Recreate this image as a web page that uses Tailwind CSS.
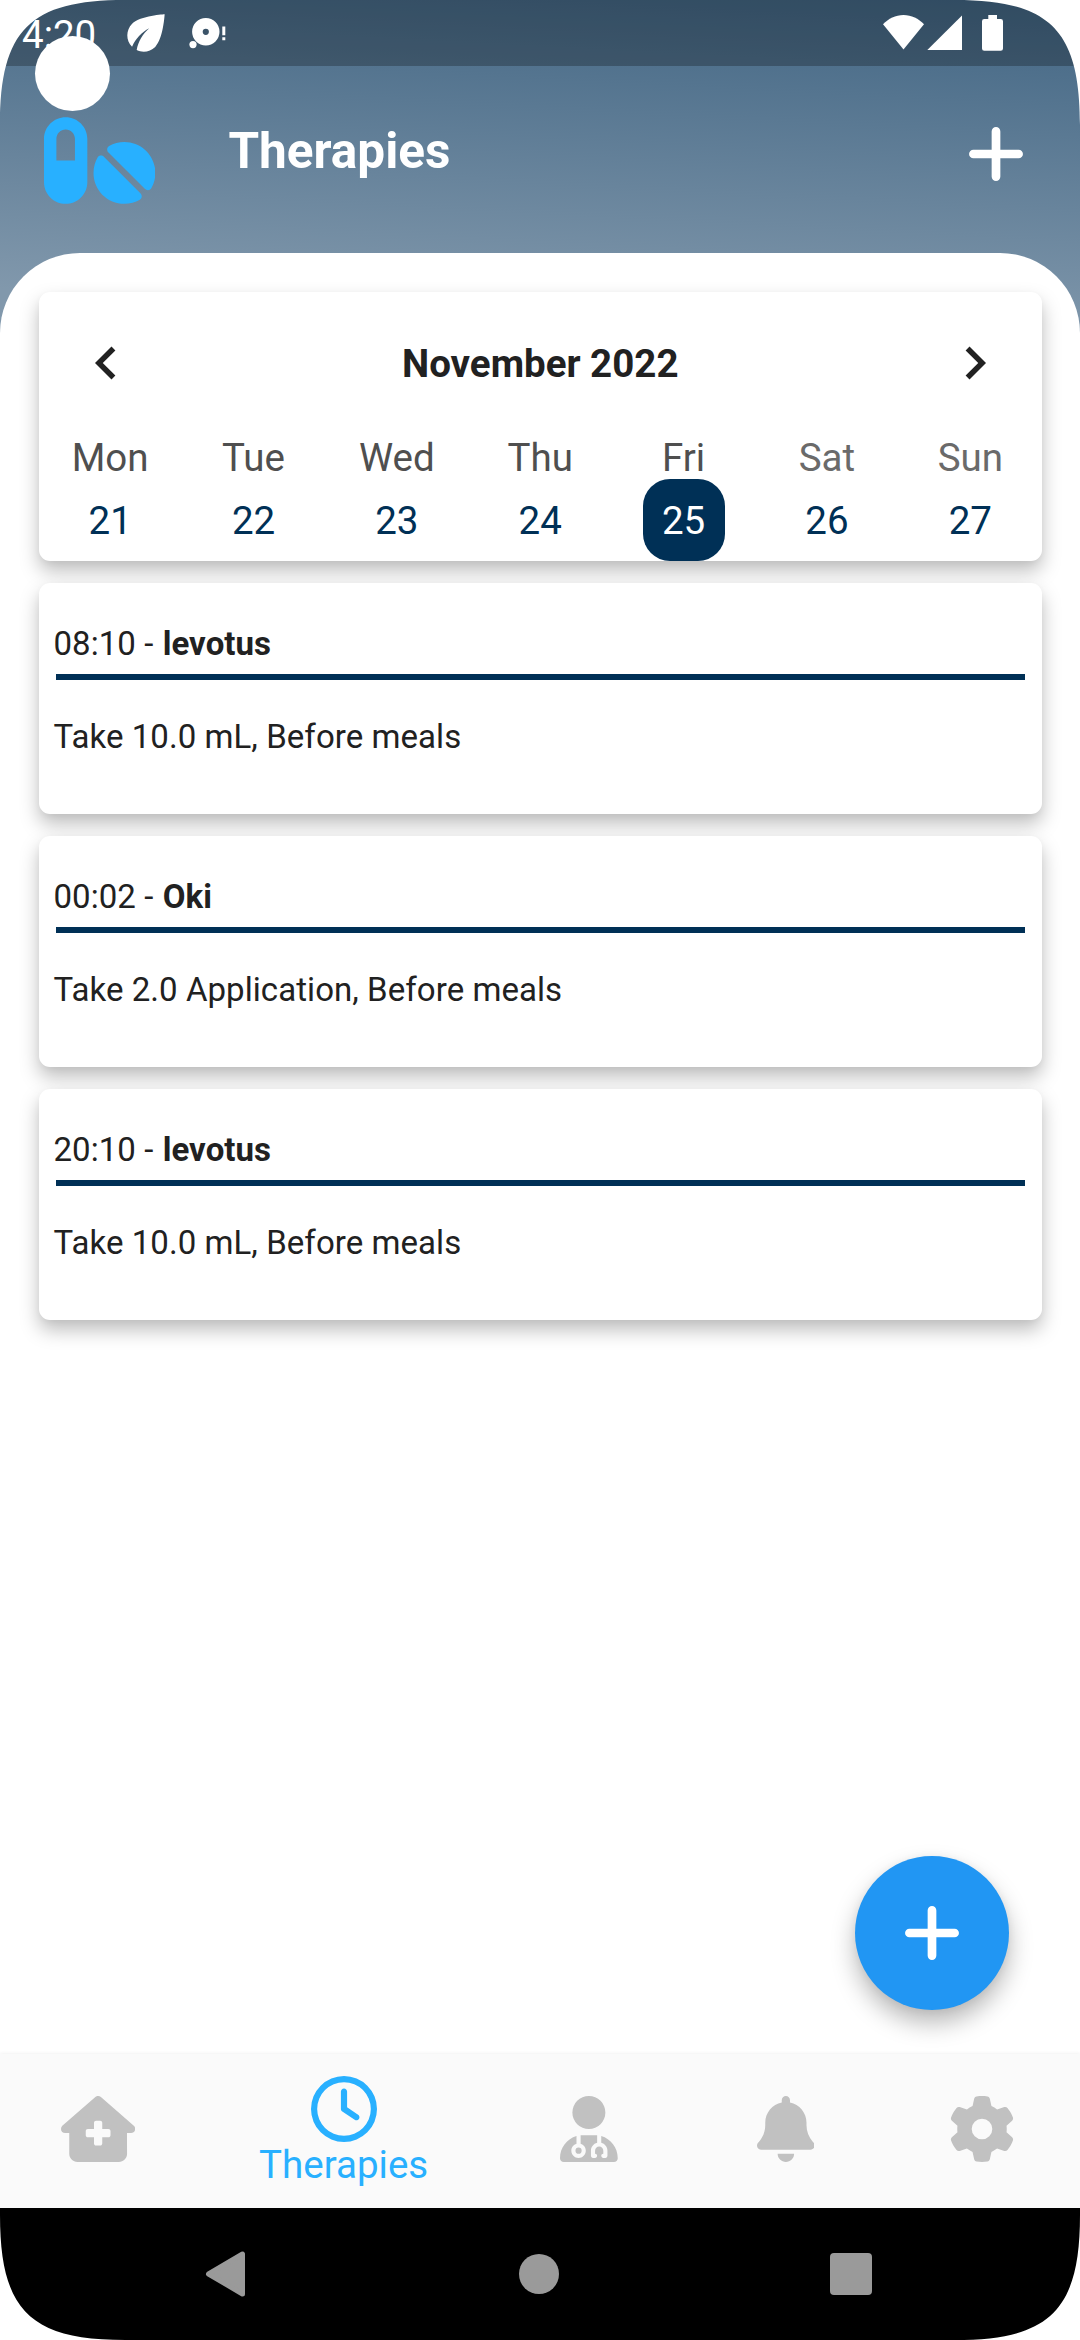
<!DOCTYPE html>
<html lang="en">
<head>
    <meta charset="UTF-8">
    <meta name="viewport" content="width=device-width, initial-scale=1.0">
    <title>Therapies</title>
    <script src="https://cdn.jsdelivr.net/npm/@tailwindcss/browser@4"></script>
</head>
<body class="bg-white font-[Roboto,sans-serif]">
    <div class="relative w-[1080px] h-[2340px] overflow-hidden flex flex-col text-[#212121]">
        <div class="flex-1 flex flex-col bg-[linear-gradient(183deg,#416583_0px,#8198ac_345px)]">
            <!-- Status bar -->
            <div class="h-[66px] shrink-0 bg-black/25 flex items-start text-white">
                <div class="w-[118px] pl-[22px] pt-[12px] text-[38.5px] leading-[45px]">4:20</div>
                <svg class="w-[56px] h-[56px] mt-[5px]" viewBox="0 0 24 24" fill="currentColor"><path d="M6.05 8.05c-2.73 2.73-2.73 7.15-.02 9.88 1.47-3.4 4.09-6.24 7.36-7.93-2.77 2.34-4.71 5.61-5.39 9.32 2.6 1.23 5.8.78 7.95-1.37C19.43 14.47 20 4 20 4S9.53 4.57 6.05 8.05z"/></svg>
                <svg class="w-[56px] h-[66px]" viewBox="174 0 56 66" fill="currentColor">
                    <circle cx="205.8" cy="31.8" r="8.4" fill="none" stroke="currentColor" stroke-width="10.6"/>
                    <circle cx="193" cy="44.6" r="3.6"/>
                    <path d="M222.3 26.5h3v8.7h-3zM222.3 37.2h3v3h-3z"/>
                </svg>
                <svg class="w-[130px] h-[66px] ml-auto mr-[70px]" viewBox="880 0 130 66" fill="currentColor">
                    <path d="M903.5 49.5L883 24.3C888.5 18.5 895.5 15 903.5 15S918.5 18.5 924 24.3z"/>
                    <path d="M927.3 50L962 15.5V50z"/>
                    <path d="M988.3 15h8.7v4h3.7a2.3 2.3 0 0 1 2.3 2.3v27.2a2.3 2.3 0 0 1-2.3 2.3h-16.4a2.3 2.3 0 0 1-2.3-2.3V21.3a2.3 2.3 0 0 1 2.3-2.3h4z"/>
                </svg>
            </div>

            <!-- App bar -->
            <div class="h-[187px] shrink-0 flex items-start pl-[44px] pr-[57px] text-white">
                <svg class="w-[111.4px] h-[99px] mt-[45px] text-[#28b0ff]" viewBox="0 0 576 512" fill="currentColor"><path d="M112 96c-26.5 0-48 21.5-48 48V256h96V144c0-26.5-21.5-48-48-48zM0 144C0 82.1 50.1 32 112 32s112 50.1 112 112V368c0 61.9-50.1 112-112 112S0 429.9 0 368V144zM554.9 399.4c-7.1 12.3-23.7 13.1-33.8 3.1L333.5 214.9c-10-10-9.3-26.7 3.1-33.8C360 167.7 387.1 160 416 160c88.4 0 160 71.6 160 160c0 28.9-7.7 56-21.1 79.4zm-59.5 59.5C472 472.3 444.9 480 416 480c-88.4 0-160-71.6-160-160c0-28.9 7.7-56 21.1-79.4c7.1-12.3 23.7-13.1 33.8-3.1L498.5 425.1c10 10 9.3 26.7-3.1 33.8z"/></svg>
                <h1 class="ml-[73px] mt-[55px] text-[49.5px] leading-[60px] font-bold">Therapies</h1>
                <svg class="w-[54px] h-[54px] ml-auto mt-[61px]" viewBox="0 0 54 54" fill="none" stroke="currentColor" stroke-width="8.7" stroke-linecap="round"><path d="M27 4.4v45.2M4.4 27h45.2"/></svg>
            </div>

            <!-- Content -->
            <main class="flex-1 bg-white rounded-t-[80px] pl-[38.5px] pr-[38px] pt-[38.5px] flex flex-col gap-[22px]">
                <section class="h-[269.5px] rounded-[11px] bg-white pt-[38.5px] shadow-[0_10px_19px_rgba(0,0,0,0.26),0_2px_6px_rgba(0,0,0,0.03)]">
                    <div class="h-[66px] px-[34px] flex items-center justify-between">
                        <svg class="w-[66px] h-[66px]" viewBox="0 0 24 24" fill="currentColor"><path d="M15.41 7.41L14 6l-6 6 6 6 1.41-1.41L10.83 12z"/></svg>
                        <h2 class="pt-[1px] text-[38.5px] font-bold">November 2022</h2>
                        <svg class="w-[66px] h-[66px]" viewBox="0 0 24 24" fill="currentColor"><path d="M10 6L8.59 7.41 13.17 12l-4.58 4.59L10 18l6-6z"/></svg>
                    </div>
                    <div class="h-[83px] pt-[40px] grid grid-cols-7 text-center text-[38.5px] leading-[44px] text-[#4f4f4f]">
                        <div>Mon</div>
                        <div>Tue</div>
                        <div>Wed</div>
                        <div>Thu</div>
                        <div>Fri</div>
                        <div class="text-[#6a6a6a]">Sat</div>
                        <div class="text-[#6a6a6a]">Sun</div>
                    </div>
                    <div class="grid grid-cols-7 justify-items-center text-center text-[38.5px] leading-[83px] h-[82px] text-[#003056]">
                        <div>21</div>
                        <div>22</div>
                        <div>23</div>
                        <div>24</div>
                        <div class="w-[82px] h-[82px] rounded-[27px] bg-[#003056] text-white">25</div>
                        <div>26</div>
                        <div>27</div>
                    </div>
                </section>

                <section class="h-[231px] rounded-[11px] bg-white px-[15px] pt-[41px] text-[33px] tracking-[0.06px] shadow-[0_10px_19px_rgba(0,0,0,0.26),0_2px_6px_rgba(0,0,0,0.03)]">
                    <p class="leading-[40px]">08:10 - <b class="ml-[1px]">levotus</b></p>
                    <div class="mx-[2px] mt-[10px] h-[5.5px] bg-[#003056]"></div>
                    <p class="mt-[37px] leading-[40px]">Take 10.0 mL, Before meals</p>
                </section>
                <section class="h-[231px] rounded-[11px] bg-white px-[15px] pt-[41px] text-[33px] tracking-[0.06px] shadow-[0_10px_19px_rgba(0,0,0,0.26),0_2px_6px_rgba(0,0,0,0.03)]">
                    <p class="leading-[40px]">00:02 - <b class="ml-[1px]">Oki</b></p>
                    <div class="mx-[2px] mt-[10px] h-[5.5px] bg-[#003056]"></div>
                    <p class="mt-[37px] leading-[40px]">Take 2.0 Application, Before meals</p>
                </section>
                <section class="h-[231px] rounded-[11px] bg-white px-[15px] pt-[41px] text-[33px] tracking-[0.06px] shadow-[0_10px_19px_rgba(0,0,0,0.26),0_2px_6px_rgba(0,0,0,0.03)]">
                    <p class="leading-[40px]">20:10 - <b class="ml-[1px]">levotus</b></p>
                    <div class="mx-[2px] mt-[10px] h-[5.5px] bg-[#003056]"></div>
                    <p class="mt-[37px] leading-[40px]">Take 10.0 mL, Before meals</p>
                </section>
            </main>
        </div>

        <!-- Bottom navigation -->
        <nav class="h-[154px] shrink-0 bg-[#fafafa] flex items-center text-[#c1c1c1] shadow-[0_-1px_3px_rgba(0,0,0,0.05)]">
            <div class="flex-[2] flex justify-center pb-[4px]">
                <svg class="h-[66px] w-[74.25px]" viewBox="0 0 576 512" fill="currentColor"><path d="M543.8 287.6c17 0 32-14 32-32.1c1-9-3-17-11-24L309.5 7c-6-5-14-7-21-7s-15 1-22 8L10 231.5c-7 7-10 15-10 24c0 18 14 32.1 32 32.1h32V448c0 35.3 28.7 64 64 64H448.5c35.5 0 64.2-28.8 64-64.3l-.7-160.2h32zM256 208c0-8.8 7.2-16 16-16h32c8.8 0 16 7.2 16 16v48h48c8.8 0 16 7.2 16 16v32c0 8.8-7.2 16-16 16H320v48c0 8.8-7.2 16-16 16H272c-8.8 0-16-7.2-16-16V320H208c-8.8 0-16-7.2-16-16V272c0-8.8 7.2-16 16-16h48V208z"/></svg>
            </div>
            <div class="flex-[3] flex flex-col items-center text-[#28b0ff]">
                <svg class="w-[66px] h-[66px]" viewBox="0 0 512 512" fill="currentColor"><path d="M464 256A208 208 0 1 1 48 256a208 208 0 1 1 416 0zM0 256a256 256 0 1 0 512 0A256 256 0 1 0 0 256zM232 120V256c0 8 4 15.5 10.7 20l96 64c11 7.4 25.9 4.4 33.3-6.7s4.4-25.9-6.7-33.3L280 243.2V120c0-13.3-10.7-24-24-24s-24 10.7-24 24z"/></svg>
                <span class="text-[38.5px] leading-[45px]">Therapies</span>
            </div>
            <div class="flex-[2] flex justify-center pb-[4px]">
                <svg class="h-[66px] w-[57.75px]" viewBox="0 0 448 512" fill="currentColor"><path d="M224 256A128 128 0 1 0 224 0a128 128 0 1 0 0 256zm-96 55.2C54 332.9 0 401.3 0 482.3C0 498.7 13.3 512 29.7 512H418.3c16.4 0 29.7-13.3 29.7-29.7c0-81-54-149.4-128-171.1V362c27.6 7.1 48 32.2 48 62v40c0 8.8-7.2 16-16 16H336c-8.8 0-16-7.2-16-16s7.2-16 16-16V424c0-17.7-14.3-32-32-32s-32 14.3-32 32v24c8.8 0 16 7.2 16 16s-7.2 16-16 16H256c-8.8 0-16-7.2-16-16V424c0-29.8 20.4-54.9 48-62V304.9c-6-.6-12.1-.9-18.3-.9H178.3c-6.2 0-12.3 .3-18.3 .9v65.4c23.1 6.9 40 28.3 40 53.7c0 30.9-25.1 56-56 56s-56-25.1-56-56c0-25.4 16.9-46.8 40-53.7V311.2zM144 448a24 24 0 1 0 0-48 24 24 0 1 0 0 48z"/></svg>
            </div>
            <div class="flex-[2] flex justify-center pb-[4px]">
                <svg class="h-[66px] w-[57.75px]" viewBox="0 0 448 512" fill="currentColor"><path d="M224 0c-17.7 0-32 14.3-32 32V51.2C119 66 64 130.6 64 208v18.8c0 47-17.3 92.4-48.5 127.6l-7.4 8.3c-8.4 9.4-10.4 22.9-5.3 34.4S19.4 416 32 416H416c12.6 0 24-7.4 29.2-18.9s3.1-25-5.3-34.4l-7.4-8.3C401.3 319.2 384 273.9 384 226.8V208c0-77.4-55-142-128-156.8V32c0-17.7-14.3-32-32-32zm45.3 493.3c12-12 18.7-28.3 18.7-45.3H224 160c0 17 6.7 33.3 18.7 45.3s28.3 18.7 45.3 18.7s33.3-6.7 45.3-18.7z"/></svg>
            </div>
            <div class="flex-[2] flex justify-center pb-[4px]">
                <svg class="h-[66px] w-[66px]" viewBox="0 0 512 512" fill="currentColor"><path d="M495.9 166.6c3.2 8.7 .5 18.4-6.4 24.6l-43.3 39.4c1.1 8.3 1.7 16.8 1.7 25.4s-.6 17.1-1.7 25.4l43.3 39.4c6.9 6.2 9.6 15.9 6.4 24.6c-4.4 11.9-9.7 23.3-15.8 34.3l-4.7 8.1c-6.6 11-14 21.4-22.1 31.2c-5.9 7.2-15.7 9.6-24.5 6.8l-55.7-17.7c-13.4 10.3-28.2 18.9-44 25.4l-12.5 57.1c-2 9.1-9 16.3-18.2 17.8c-13.8 2.3-28 3.5-42.5 3.5s-28.7-1.2-42.5-3.5c-9.2-1.5-16.2-8.7-18.2-17.8l-12.5-57.1c-15.8-6.5-30.6-15.1-44-25.4L83.1 425.9c-8.8 2.8-18.6 .3-24.5-6.8c-8.1-9.8-15.5-20.2-22.1-31.2l-4.7-8.1c-6.1-11-11.4-22.4-15.8-34.3c-3.2-8.7-.5-18.4 6.4-24.6l43.3-39.4C64.6 273.1 64 264.6 64 256s.6-17.1 1.7-25.4L22.4 191.2c-6.9-6.2-9.6-15.9-6.4-24.6c4.4-11.9 9.7-23.3 15.8-34.3l4.7-8.1c6.6-11 14-21.4 22.1-31.2c5.9-7.2 15.7-9.6 24.5-6.8l55.7 17.7c13.4-10.3 28.2-18.9 44-25.4l12.5-57.1c2-9.1 9-16.3 18.2-17.8C227.3 1.2 241.5 0 256 0s28.7 1.2 42.5 3.5c9.2 1.5 16.2 8.7 18.2 17.8l12.5 57.1c15.8 6.5 30.6 15.1 44 25.4l55.7-17.7c8.8-2.8 18.6-.3 24.5 6.8c8.1 9.8 15.5 20.2 22.1 31.2l4.7 8.1c6.1 11 11.4 22.4 15.8 34.3zM256 336a80 80 0 1 0 0-160 80 80 0 1 0 0 160z"/></svg>
            </div>
        </nav>

        <!-- System buttons -->
        <div class="h-[132px] shrink-0 bg-black flex items-center justify-between pl-[205px] pr-[208px] text-[#9a9a9a]">
            <svg class="w-[42px] h-[46px]" viewBox="0 0 42 46" fill="currentColor" stroke="currentColor" stroke-width="5" stroke-linejoin="round"><path d="M3.5 23L37.5 3v40z"/></svg>
            <div class="w-[40px] h-[40px] rounded-full bg-[#9a9a9a]"></div>
            <div class="w-[42px] h-[42px] rounded-[4px] bg-[#9a9a9a]"></div>
        </div>

        <!-- Floating action button -->
        <div class="absolute left-[854.5px] top-[1856px] w-[154px] h-[154px] rounded-full bg-[#2196f3] flex items-center justify-center text-white shadow-[0_13px_24px_rgba(0,0,0,0.28),0_1px_8px_rgba(0,0,0,0.05)]">
            <svg class="w-[54px] h-[54px]" viewBox="0 0 54 54" fill="none" stroke="currentColor" stroke-width="8.7" stroke-linecap="round"><path d="M27 4.4v45.2M4.4 27h45.2"/></svg>
        </div>

        <!-- Camera hole -->
        <div class="absolute left-[35px] top-[36px] w-[75px] h-[75px] rounded-full bg-white"></div>

        <!-- Screen corners -->
        <svg class="absolute left-0 top-0 w-[125px] h-[125px] text-white" viewBox="0 0 125 125" fill="currentColor"><path d="M0 0H125C30 0 0 30 0 125z"/></svg>
        <svg class="absolute right-0 top-0 w-[125px] h-[125px] text-white -scale-x-100" viewBox="0 0 125 125" fill="currentColor"><path d="M0 0H125C30 0 0 30 0 125z"/></svg>
        <svg class="absolute left-0 bottom-0 w-[125px] h-[125px] text-white -scale-y-100" viewBox="0 0 125 125" fill="currentColor"><path d="M0 0H125C30 0 0 30 0 125z"/></svg>
        <svg class="absolute right-0 bottom-0 w-[125px] h-[125px] text-white rotate-180" viewBox="0 0 125 125" fill="currentColor"><path d="M0 0H125C30 0 0 30 0 125z"/></svg>
    </div>
</body>
</html>
